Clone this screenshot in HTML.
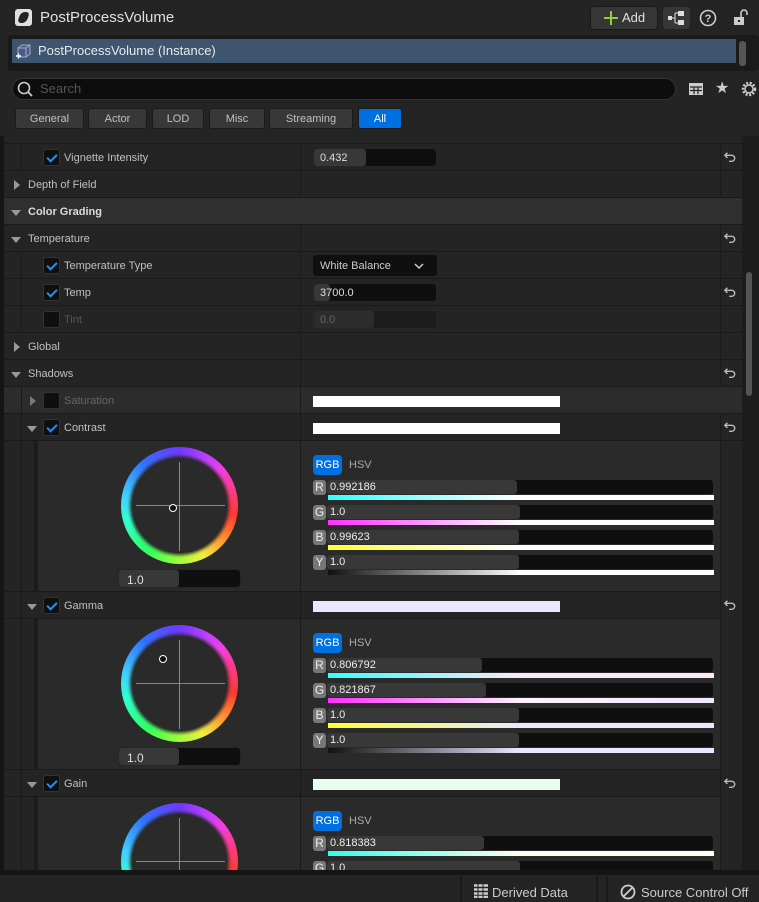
<!DOCTYPE html>
<html><head><meta charset="utf-8"><style>
*{box-sizing:border-box;margin:0;padding:0}
body{width:759px;height:902px;background:#242424;font-family:"Liberation Sans",sans-serif;color:#c0c0c0;position:relative;overflow:hidden;font-size:11px}
.a{position:absolute}
.row{position:absolute;left:4px;width:738px;height:27px;border-bottom:1px solid #1a1a1a;background:#242424}
.lbl{position:absolute;top:8px;font-size:11px;color:#c0c0c0;white-space:nowrap}
.cb{position:absolute;width:17px;height:17px;background:#0f0f0f;border:1px solid #333;border-radius:3px;top:5px}
.cb.on::after{content:"";position:absolute;left:5px;top:2px;width:4px;height:8px;border:solid #2a8cf0;border-width:0 2px 2px 0;transform:rotate(45deg)}
.tri-r{position:absolute;width:0;height:0;border-left:6px solid #999;border-top:5px solid transparent;border-bottom:5px solid transparent;top:9px}
.tri-d{position:absolute;width:0;height:0;border-top:6px solid #999;border-left:5px solid transparent;border-right:5px solid transparent;top:12px}
.vsep{position:absolute;top:0;width:1px;height:100%;background:#1a1a1a}
.num{position:absolute;height:19px;background:#0f0f0f;border:1px solid #262626;border-radius:4px;overflow:hidden}
.num .f{position:absolute;left:0;top:0;bottom:0;background:#383838;border-radius:3px}
.num span{position:absolute;left:6px;top:3px;color:#ddd;font-size:11px}
.tab{position:absolute;top:108px;height:21px;background:#383838;border:1px solid #1a1a1a;border-radius:3px;color:#c0c0c0;font-size:11px;text-align:center;line-height:20px}
.wheel{position:absolute;width:117px;height:117px;border-radius:50%;background:conic-gradient(from 0deg,#7038ff,#c040ff 30deg,#f040e0 50deg,#ff3a70 80deg,#ff3a30 100deg,#ff9a30 130deg,#f0f040 155deg,#80ff40 190deg,#30ff60 215deg,#30ffd0 255deg,#40d0ff 280deg,#3070ff 320deg,#7038ff)}
.wheel::after{content:"";position:absolute;left:11px;top:11px;width:95px;height:95px;border-radius:50%;background:#2a2a2a;box-shadow:0 0 3px 2px #2a2a2a}
.ch{position:absolute;background:#888;z-index:2}
.panel{position:absolute;left:38px;width:704px;background:#2a2a2a;border-bottom:1px solid #1a1a1a}
.rgb{position:absolute;width:29px;height:20px;background:#0070e0;border-radius:4px;color:#fff;font-size:11px;text-align:center;line-height:20px}
.hsv{position:absolute;color:#aaa;font-size:11px}
.ch-l{position:absolute;width:13px;height:15px;background:#777;border-radius:3px;color:#eee;font-size:12px;line-height:15px;text-align:center}
.sl{position:absolute;width:386px;height:14px;background:#0f0f0f;border-radius:3px;overflow:hidden}
.sl .f{position:absolute;left:0;top:0;bottom:0;background:#383838;border-radius:3px}
.sl span{position:absolute;left:3px;top:1px;font-size:11px;color:#eee;line-height:13px}
.gb{position:absolute;width:386px;height:5px}
.wbar{position:absolute;left:313px;width:247px;height:11px}
</style></head><body>
<div class="a" style="left:0;top:0;width:759px;height:36px;background:#242424"></div>
<div class="a" style="left:15px;top:9px;width:17px;height:17px;background:#e0e0e0;border-radius:3px"></div>
<div class="a" style="left:19px;top:12px;width:9px;height:11px;background:#242424;transform:skewX(-20deg);border-radius:4px"></div>
<div class="a" style="left:40px;top:9px;font-size:15px;color:#e0e0e0">PostProcessVolume</div>
<div class="a" style="left:590px;top:6px;width:68px;height:24px;background:#363636;border:1px solid #1a1a1a;border-radius:4px"></div>
<div class="a" style="left:604px;top:17px;width:14px;height:2px;background:#8fcf3a"></div>
<div class="a" style="left:610px;top:11px;width:2px;height:14px;background:#8fcf3a"></div>
<div class="a" style="left:622px;top:10px;font-size:13px;color:#e0e0e0">Add</div>
<div class="a" style="left:663px;top:7px;width:27px;height:22px;background:#363636;border-radius:4px"></div>
<svg class="a" style="left:667px;top:10px" width="20" height="16"><rect x="1" y="6" width="4" height="4" fill="#ddd"/><path d="M5 8h3M8 3v10M8 3h3M8 13h3" stroke="#ddd" fill="none"/><rect x="11" y="1" width="6" height="5" fill="#ddd"/><rect x="11" y="10" width="6" height="5" fill="#ddd"/></svg>
<svg class="a" style="left:699px;top:9px" width="18" height="18"><circle cx="9" cy="9" r="7.5" stroke="#ccc" stroke-width="1.6" fill="none"/><text x="9" y="13" text-anchor="middle" font-size="11" font-weight="bold" fill="#ccc" font-family="Liberation Sans">?</text></svg>
<svg class="a" style="left:732px;top:8px" width="18" height="18"><path d="M9 9V5a3 3 0 0 1 6 0v2" stroke="#ccc" stroke-width="1.6" fill="none"/><rect x="2" y="9" width="10" height="8" fill="#ccc"/><rect x="6" y="12" width="2" height="2" fill="#242424"/></svg>
<div class="a" style="left:8px;top:35px;width:751px;height:36px;background:#1a1a1a;border-radius:3px"></div>
<div class="a" style="left:12px;top:39px;width:724px;height:24px;background:#3e5570"></div>
<svg class="a" style="left:15px;top:43px" width="17" height="17"><path d="M3 5l4-3h8v9l-4 3H3z" fill="#4a5a90" stroke="#aab" stroke-width="1"/><path d="M3 5h8v9M11 5l4-3" stroke="#aab" fill="none"/><path d="M1 13h5M3.5 10.5v5" stroke="#fff" stroke-width="1.4"/></svg>
<div class="a" style="left:38px;top:43px;font-size:13px;color:#e8e8e8">PostProcessVolume (Instance)</div>
<div class="a" style="left:739px;top:41px;width:7px;height:25px;background:#555;border-radius:3px"></div>
<div class="a" style="left:12px;top:78px;width:664px;height:22px;background:#0d0d0d;border:1px solid #333;border-radius:11px"></div>
<svg class="a" style="left:17px;top:81px" width="18" height="18"><circle cx="7" cy="7" r="5.5" stroke="#ccc" stroke-width="1.6" fill="none"/><path d="M11 11l4 4" stroke="#ccc" stroke-width="1.8"/></svg>
<div class="a" style="left:40px;top:81px;font-size:13px;color:#555">Search</div>
<svg class="a" style="left:688px;top:81px" width="16" height="16"><rect x="1" y="2" width="14" height="12" fill="#ccc"/><path d="M2 6h12M2 9.5h12M6 6v7M10 6v7" stroke="#242424" stroke-width="1.2"/></svg>
<div class="a" style="left:715px;top:78px;font-size:16px;color:#ccc">★</div>
<svg class="a" style="left:740px;top:80px" width="18" height="18"><circle cx="9" cy="9" r="6" stroke="#ccc" stroke-width="2.5" fill="none" stroke-dasharray="2 1.6"/><circle cx="9" cy="9" r="4" stroke="#ccc" stroke-width="1.5" fill="none"/></svg>
<div class="tab" style="left:15px;width:69px">General</div>
<div class="tab" style="left:88px;width:59px">Actor</div>
<div class="tab" style="left:152px;width:52px">LOD</div>
<div class="tab" style="left:209px;width:56px">Misc</div>
<div class="tab" style="left:269px;width:84px">Streaming</div>
<div class="tab" style="left:358px;width:44px;background:#0070e0;color:#fff">All</div>
<div class="a" style="left:0;top:136px;width:4px;height:736px;background:#151515"></div>
<div class="a" style="left:4px;top:136px;width:738px;height:8px;background:#242424;border-bottom:1px solid #1a1a1a"></div>
<div class="a" style="left:742px;top:136px;width:17px;height:736px;background:#1c1c1c"></div>
<div class="a" style="left:746px;top:272px;width:6px;height:124px;background:#555;border-radius:3px"></div>

<div class="row" style="top:144px"><div class="vsep" style="left:17px"></div><div class="cb on" style="left:39px"></div><div class="lbl" style="left:60px">Vignette Intensity</div><div class="vsep" style="left:296px"></div><div class="num" style="left:309px;top:4px;width:124px"><div class="f" style="width:52px"></div><span>0.432</span></div><div class="vsep" style="left:716px"></div></div>
<div class="row" style="top:171px"><div class="tri-r" style="left:10px"></div><div class="lbl" style="left:24px">Depth of Field</div><div class="vsep" style="left:296px"></div><div class="vsep" style="left:716px"></div></div>
<div class="row" style="top:198px;background:#2f2f2f"><div class="tri-d" style="left:7px"></div><div class="lbl" style="left:24px;font-weight:bold;color:#ddd">Color Grading</div></div>
<div class="row" style="top:225px"><div class="tri-d" style="left:7px"></div><div class="lbl" style="left:24px">Temperature</div><div class="vsep" style="left:296px"></div><div class="vsep" style="left:716px"></div></div>
<div class="row" style="top:252px"><div class="vsep" style="left:17px"></div><div class="cb on" style="left:39px"></div><div class="lbl" style="left:60px">Temperature Type</div><div class="vsep" style="left:296px"></div><div class="a" style="left:309px;top:3px;width:124px;height:21px;background:#0f0f0f;border-radius:3px"><span style="position:absolute;left:7px;top:5px;color:#ccc">White Balance</span><svg style="position:absolute;left:101px;top:8px" width="10" height="7"><path d="M1 1l4 4 4-4" stroke="#ccc" stroke-width="1.5" fill="none"/></svg></div><div class="vsep" style="left:716px"></div></div>
<div class="row" style="top:279px"><div class="vsep" style="left:17px"></div><div class="cb on" style="left:39px"></div><div class="lbl" style="left:60px">Temp</div><div class="vsep" style="left:296px"></div><div class="num" style="left:309px;top:4px;width:124px"><div class="f" style="width:16px"></div><span>3700.0</span></div><div class="vsep" style="left:716px"></div></div>
<div class="row" style="top:306px"><div class="vsep" style="left:17px"></div><div class="cb" style="left:39px"></div><div class="lbl" style="left:60px;color:#555">Tint</div><div class="vsep" style="left:296px"></div><div class="num" style="left:309px;top:4px;width:124px;background:#1c1c1c"><div class="f" style="width:60px;background:#2c2c2c"></div><span style="color:#666">0.0</span></div><div class="vsep" style="left:716px"></div></div>
<div class="row" style="top:333px"><div class="tri-r" style="left:10px"></div><div class="lbl" style="left:24px">Global</div><div class="vsep" style="left:296px"></div><div class="vsep" style="left:716px"></div></div>
<div class="row" style="top:360px"><div class="tri-d" style="left:7px"></div><div class="lbl" style="left:24px">Shadows</div><div class="vsep" style="left:296px"></div><div class="vsep" style="left:716px"></div></div>
<div class="row" style="top:387px;background:#2c2c2c"><div class="vsep" style="left:17px"></div><div class="tri-r" style="left:26px;border-left-color:#777"></div><div class="cb" style="left:39px"></div><div class="lbl" style="left:60px;color:#666">Saturation</div><div class="vsep" style="left:296px"></div><div class="wbar" style="left:309px;top:9px;background:#fff"></div></div>
<div class="row" style="top:414px"><div class="vsep" style="left:17px"></div><div class="tri-d" style="left:23px"></div><div class="cb on" style="left:39px"></div><div class="lbl" style="left:60px">Contrast</div><div class="vsep" style="left:296px"></div><div class="wbar" style="left:309px;top:9px;background:#fff"></div><div class="vsep" style="left:716px"></div></div>
<div class="row" style="top:592px"><div class="vsep" style="left:17px"></div><div class="tri-d" style="left:23px"></div><div class="cb on" style="left:39px"></div><div class="lbl" style="left:60px">Gamma</div><div class="vsep" style="left:296px"></div><div class="wbar" style="left:309px;top:9px;background:#e8e8ff"></div><div class="vsep" style="left:716px"></div></div>
<div class="row" style="top:770px"><div class="vsep" style="left:17px"></div><div class="tri-d" style="left:23px"></div><div class="cb on" style="left:39px"></div><div class="lbl" style="left:60px">Gain</div><div class="vsep" style="left:296px"></div><div class="wbar" style="left:309px;top:9px;background:#e8fff0"></div><div class="vsep" style="left:716px"></div></div>

<div class="a" style="left:4px;top:441px;width:34px;height:151px;background:#242424;border-bottom:1px solid #1a1a1a"></div>
<div class="a" style="left:21px;top:441px;width:1px;height:151px;background:#1a1a1a"></div>
<div class="a" style="left:34px;top:441px;width:4px;height:151px;background:#1c1c1c"></div>
<div class="panel" style="top:441px;height:151px"></div>
<div class="a" style="left:4px;top:619px;width:34px;height:151px;background:#242424;border-bottom:1px solid #1a1a1a"></div>
<div class="a" style="left:21px;top:619px;width:1px;height:151px;background:#1a1a1a"></div>
<div class="a" style="left:34px;top:619px;width:4px;height:151px;background:#1c1c1c"></div>
<div class="panel" style="top:619px;height:151px"></div>
<div class="a" style="left:4px;top:797px;width:34px;height:73px;background:#242424"></div>
<div class="a" style="left:21px;top:797px;width:1px;height:73px;background:#1a1a1a"></div>
<div class="a" style="left:34px;top:797px;width:4px;height:73px;background:#1c1c1c"></div>
<div class="panel" style="top:797px;height:73px;border:none"></div>
<div class="a" style="left:300px;top:441px;width:1px;height:429px;background:#1a1a1a"></div>
<div class="a" style="left:720px;top:441px;width:1px;height:429px;background:#1a1a1a"></div>
<div class="a" style="left:721px;top:441px;width:21px;height:429px;background:#242424"></div>

<div class="wheel" style="left:121px;top:447px"></div>
<div class="ch" style="left:136px;top:505px;width:89px;height:1px"></div>
<div class="ch" style="left:179px;top:462px;width:1px;height:89px"></div>
<div class="a" style="left:169px;top:504px;width:8px;height:8px;border:1.5px solid #fff;border-radius:50%;background:#111;z-index:3"></div>
<div class="num" style="left:118px;top:569px;width:123px;height:19px"><div class="f" style="width:60px"></div><span style="left:8px;font-size:12px">1.0</span></div>

<div class="wheel" style="left:121px;top:625px"></div>
<div class="ch" style="left:136px;top:683px;width:89px;height:1px"></div>
<div class="ch" style="left:179px;top:640px;width:1px;height:89px"></div>
<div class="a" style="left:159px;top:655px;width:8px;height:8px;border:1.5px solid #fff;border-radius:50%;background:#111;z-index:3"></div>
<div class="num" style="left:118px;top:747px;width:123px;height:19px"><div class="f" style="width:60px"></div><span style="left:8px;font-size:12px">1.0</span></div>

<div class="a" style="left:0;top:803px;width:300px;height:67px;overflow:hidden"><div class="wheel" style="left:121px;top:0"></div><div class="ch" style="left:136px;top:58px;width:89px;height:1px"></div><div class="ch" style="left:179px;top:15px;width:1px;height:52px"></div></div>

<div class="rgb" style="left:313px;top:455px">RGB</div><div class="hsv" style="left:349px;top:459px">HSV</div>
<div class="ch-l" style="left:313px;top:480px">R</div><div class="sl" style="left:327px;top:480px"><div class="f" style="width:190px"></div><span>0.992186</span></div><div class="gb" style="left:328px;top:495px;background:linear-gradient(90deg,#30ffff,#fff 50%,#fff)"></div>
<div class="ch-l" style="left:313px;top:505px">G</div><div class="sl" style="left:327px;top:505px"><div class="f" style="width:193px"></div><span>1.0</span></div><div class="gb" style="left:328px;top:520px;background:linear-gradient(90deg,#ff30ff,#fff 50%,#fff)"></div>
<div class="ch-l" style="left:313px;top:530px">B</div><div class="sl" style="left:327px;top:530px"><div class="f" style="width:192px"></div><span>0.99623</span></div><div class="gb" style="left:328px;top:545px;background:linear-gradient(90deg,#ffff30,#fff 50%,#fff)"></div>
<div class="ch-l" style="left:313px;top:555px">Y</div><div class="sl" style="left:327px;top:555px"><div class="f" style="width:192px"></div><span>1.0</span></div><div class="gb" style="left:328px;top:570px;background:linear-gradient(90deg,#111,#fff 50%,#fff)"></div>

<div class="rgb" style="left:313px;top:633px">RGB</div><div class="hsv" style="left:349px;top:637px">HSV</div>
<div class="ch-l" style="left:313px;top:658px">R</div><div class="sl" style="left:327px;top:658px"><div class="f" style="width:155px"></div><span>0.806792</span></div><div class="gb" style="left:328px;top:673px;background:linear-gradient(90deg,#30ffff,#ffe8f8 50%,#ffe8f8)"></div>
<div class="ch-l" style="left:313px;top:683px">G</div><div class="sl" style="left:327px;top:683px"><div class="f" style="width:159px"></div><span>0.821867</span></div><div class="gb" style="left:328px;top:698px;background:linear-gradient(90deg,#ff30ff,#fff0ff 50%,#f0e8ff)"></div>
<div class="ch-l" style="left:313px;top:708px">B</div><div class="sl" style="left:327px;top:708px"><div class="f" style="width:192px"></div><span>1.0</span></div><div class="gb" style="left:328px;top:723px;background:linear-gradient(90deg,#ffff30,#e8e8ff 50%,#e8e8ff)"></div>
<div class="ch-l" style="left:313px;top:733px">Y</div><div class="sl" style="left:327px;top:733px"><div class="f" style="width:192px"></div><span>1.0</span></div><div class="gb" style="left:328px;top:748px;background:linear-gradient(90deg,#111,#e8e8ff 50%,#e8e8ff)"></div>

<div class="rgb" style="left:313px;top:811px">RGB</div><div class="hsv" style="left:349px;top:815px">HSV</div>
<div class="ch-l" style="left:313px;top:836px">R</div><div class="sl" style="left:327px;top:836px"><div class="f" style="width:157px"></div><span>0.818383</span></div><div class="gb" style="left:328px;top:851px;background:linear-gradient(90deg,#30ffe8,#fffff0 50%,#fffff0)"></div>
<div class="a" style="left:300px;top:861px;width:420px;height:9px;overflow:hidden"><div class="ch-l" style="left:13px;top:0">G</div><div class="sl" style="left:27px;top:0"><div class="f" style="width:193px"></div><span>1.0</span></div></div>

<svg width="0" height="0" style="position:absolute"><defs><symbol id="rs" viewBox="0 0 16 14"><path d="M5 2L2 5l3 3M2 5h8a3.5 3.5 0 0 1 0 7H7" stroke="#bbb" stroke-width="1.6" fill="none"/></symbol></defs></svg>
<svg class="a" style="left:723px;top:151px" width="14" height="12"><use href="#rs"/></svg>
<svg class="a" style="left:723px;top:232px" width="14" height="12"><use href="#rs"/></svg>
<svg class="a" style="left:723px;top:286px" width="14" height="12"><use href="#rs"/></svg>
<svg class="a" style="left:723px;top:367px" width="14" height="12"><use href="#rs"/></svg>
<svg class="a" style="left:723px;top:421px" width="14" height="12"><use href="#rs"/></svg>
<svg class="a" style="left:723px;top:599px" width="14" height="12"><use href="#rs"/></svg>
<svg class="a" style="left:723px;top:777px" width="14" height="12"><use href="#rs"/></svg>

<div class="a" style="left:0;top:870px;width:759px;height:5px;background:#151515"></div>
<div class="a" style="left:0;top:875px;width:759px;height:27px;background:#242424"></div>
<div class="a" style="left:460px;top:876px;width:2px;height:26px;background:#1a1a1a"></div>
<div class="a" style="left:596px;top:876px;width:2px;height:26px;background:#1a1a1a"></div>
<div class="a" style="left:606px;top:876px;width:2px;height:26px;background:#1a1a1a"></div>
<svg class="a" style="left:474px;top:884px" width="14" height="14"><path d="M0 1.5h14M0 5.5h14M0 9.5h14M0 13h14" stroke="#ccc" stroke-width="2.5"/><path d="M4 0v14M9 0v14" stroke="#242424" stroke-width="1"/></svg>
<div class="a" style="left:492px;top:885px;font-size:13px;color:#ccc">Derived Data</div>
<svg class="a" style="left:620px;top:884px" width="16" height="16"><circle cx="8" cy="8" r="6.5" stroke="#ccc" stroke-width="1.8" fill="none"/><path d="M3.5 12.5l9-9" stroke="#ccc" stroke-width="1.8"/></svg>
<div class="a" style="left:641px;top:885px;font-size:13px;color:#ccc">Source Control Off</div>
</body></html>
